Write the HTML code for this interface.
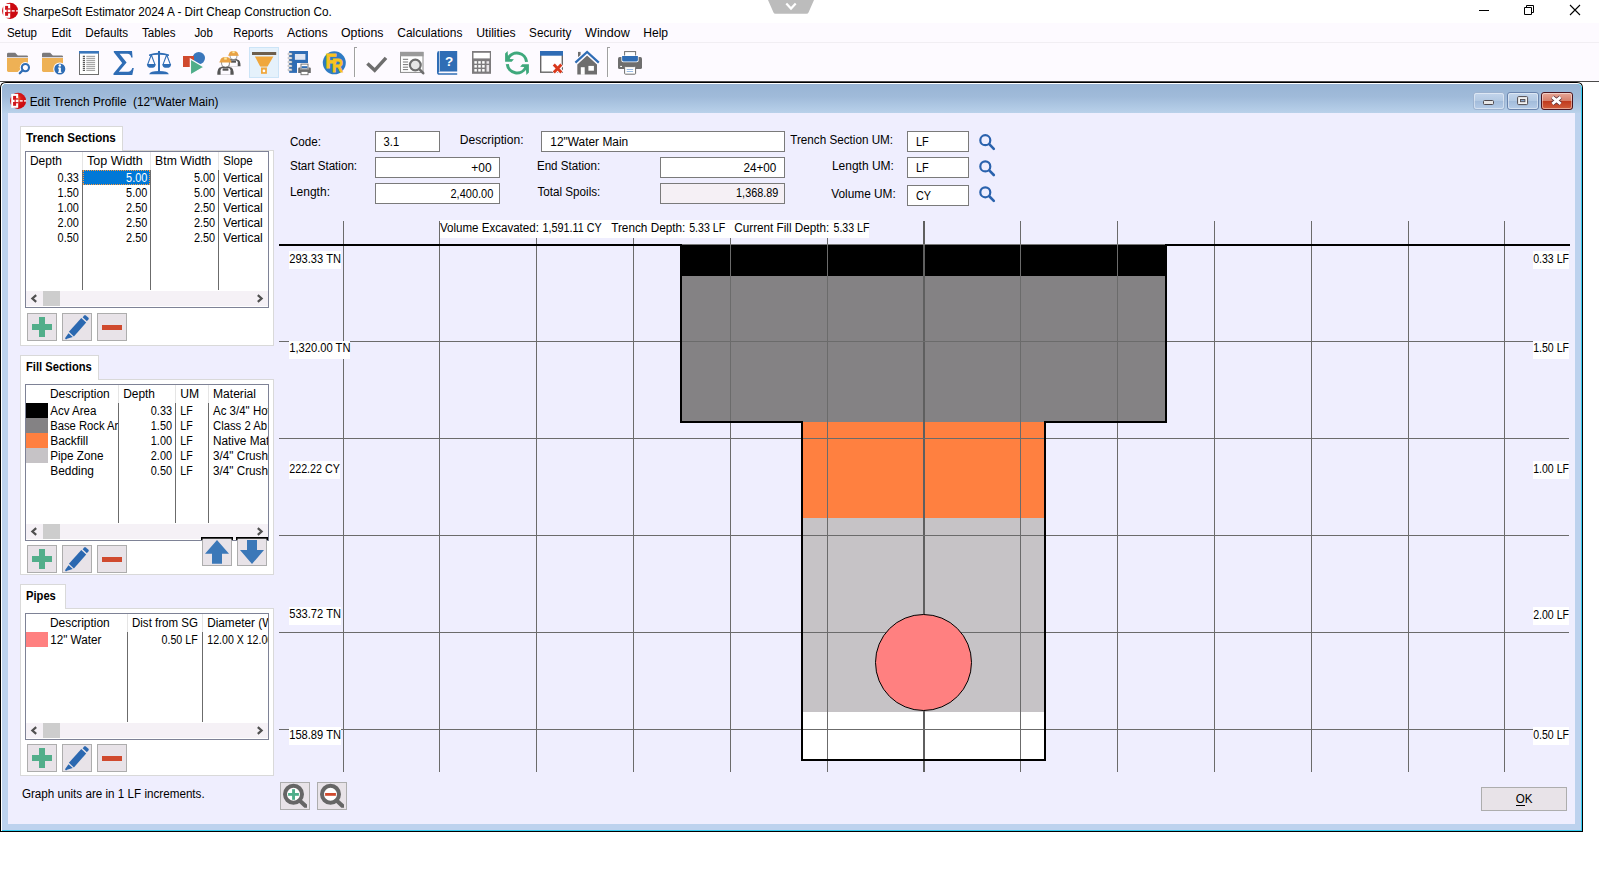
<!DOCTYPE html>
<html lang="en"><head><meta charset="utf-8"><title>SharpeSoft Estimator 2024 A - Dirt Cheap Construction Co.</title>
<style>
html,body{margin:0;padding:0;background:#fff;overflow:hidden}
svg#app{display:block;width:1599px;height:871px;font-family:"Liberation Sans",sans-serif;font-size:12px;fill:#000}
svg#app rect,svg#app path{shape-rendering:auto}
</style></head><body>
<svg id="app" width="1599" height="871" viewBox="0 0 1599 871">
<defs><radialGradient id="ig" cx="0.48" cy="0.36" r="0.5"><stop offset="0" stop-color="#f06a28"/><stop offset="0.45" stop-color="#d81a18"/><stop offset="1" stop-color="#cc0a10"/></radialGradient></defs>
<rect x="0" y="0" width="1599" height="871" fill="#fff" />
<rect x="0" y="23" width="1599" height="58" fill="#fdfaff" />
<rect x="0" y="42" width="1599" height="1" fill="#f1eef3" />
<path d="M768 0H814L808.5 12.5Q808 13.8 806.5 13.8H775.5Q774 13.8 773.5 12.5Z" fill="#bcbcbc"/>
<path d="M786.3 3.6L791 8.6L795.7 3.6" fill="none" stroke="#fff" stroke-width="2.2"/>
<rect x="1479" y="10" width="10" height="1" fill="#000" />
<path d="M1524.5 7.5h7v7h-7zM1526.5 7.5v-2h7v7h-2" fill="none" stroke="#000" stroke-width="1"/>
<path d="M1570 5L1580 15M1580 5L1570 15" fill="none" stroke="#000" stroke-width="1.1"/>
<g transform="translate(10.1 10.9)">
<circle r="8.05" fill="#cc0a10"/>
<rect x="-6.9" y="-7" width="7" height="13.9" fill="#fff"/>
<rect x="-5" y="-5" width="3" height="3.6" fill="#d0141a"/><rect x="-5" y="-2.6" width="5.1" height="1.3" fill="#d0141a"/>
<rect x="-5" y="1.2" width="3" height="3.7" fill="#d0141a"/><rect x="-5" y="1.2" width="5.1" height="1.2" fill="#d0141a"/>
<rect x="-3.6" y="-1.3" width="1.4" height="2.5" fill="#d0141a" opacity="0.8"/>
<rect x="-2.1" y="-0.7" width="2.4" height="1.4" fill="#fff"/><rect x="1.6" y="-0.7" width="3" height="1.4" fill="#fff"/><rect x="6" y="-0.7" width="2.2" height="1.4" fill="#fff"/>
</g>
<text x="23.0" y="15.8" textLength="308.8" lengthAdjust="spacingAndGlyphs" >SharpeSoft Estimator 2024 A - Dirt Cheap Construction Co.</text>
<text x="6.9" y="36.8" textLength="30.1" lengthAdjust="spacingAndGlyphs" >Setup</text>
<text x="51.5" y="36.8" textLength="19.6" lengthAdjust="spacingAndGlyphs" >Edit</text>
<text x="85.3" y="36.8" textLength="42.8" lengthAdjust="spacingAndGlyphs" >Defaults</text>
<text x="142.0" y="36.8" textLength="33.5" lengthAdjust="spacingAndGlyphs" >Tables</text>
<text x="194.4" y="36.8" textLength="18.5" lengthAdjust="spacingAndGlyphs" >Job</text>
<text x="233.3" y="36.8" textLength="39.9" lengthAdjust="spacingAndGlyphs" >Reports</text>
<text x="287.0" y="36.8" textLength="40.6" lengthAdjust="spacingAndGlyphs" >Actions</text>
<text x="341.0" y="36.8" textLength="42.5" lengthAdjust="spacingAndGlyphs" >Options</text>
<text x="397.3" y="36.8" textLength="65.1" lengthAdjust="spacingAndGlyphs" >Calculations</text>
<text x="476.2" y="36.8" textLength="39.4" lengthAdjust="spacingAndGlyphs" >Utilities</text>
<text x="529.1" y="36.8" textLength="42.2" lengthAdjust="spacingAndGlyphs" >Security</text>
<text x="585.1" y="36.8" textLength="44.6" lengthAdjust="spacingAndGlyphs" >Window</text>
<text x="643.2" y="36.8" textLength="24.9" lengthAdjust="spacingAndGlyphs" >Help</text>
<rect x="0" y="81" width="1599" height="1" fill="#4a4a4a" />
<g transform="translate(7 51)">
<path d="M0 3.2Q0 1.8 1.4 1.8H8.2L10.8 4.4H19.8Q21 4.4 21 5.6V6.3H0Z" fill="#7b797b"/>
<path d="M0 7H21V19.6Q21 21 19.6 21H1.4Q0 21 0 19.6Z" fill="#eeb155"/>
<circle cx="18.4" cy="16.6" r="5.6" fill="#fdfaff"/><path d="M16.2 18.8L11 24" stroke="#fdfaff" stroke-width="4.6"/>
<circle cx="18.4" cy="16.6" r="3.6" fill="#fdfaff" stroke="#2f6db5" stroke-width="2.1"/><path d="M15.7 19.3L12.8 22.2" stroke="#2f6db5" stroke-width="2.3" stroke-linecap="round"/>
</g>
<g transform="translate(42 51)">
<path d="M0 3.2Q0 1.8 1.4 1.8H8.2L10.8 4.4H19.8Q21 4.4 21 5.6V6.3H0Z" fill="#7b797b"/>
<path d="M0 7H21V19.6Q21 21 19.6 21H1.4Q0 21 0 19.6Z" fill="#eeb155"/>
<circle cx="17.8" cy="18" r="6.6" fill="#fdfaff"/><circle cx="17.8" cy="18" r="5.5" fill="#2f6db5"/>
<rect x="16.7" y="16.6" width="2.2" height="5" fill="#fff"/><rect x="16" y="16.6" width="2" height="1" fill="#fff"/><rect x="16" y="20.8" width="3.6" height="1" fill="#fff"/><circle cx="17.8" cy="14.6" r="1.25" fill="#fff"/>
</g>
<g transform="translate(77 51)">
<rect x="2.5" y="0.5" width="19" height="23" fill="#fff" stroke="#6e6e6e"/>
<rect x="2" y="0" width="20" height="2.6" fill="#3a77bb"/>
<rect x="5.8" y="4.8" width="2.2" height="1" fill="#333"/><rect x="9.3" y="4.85" width="8.8" height="0.9" fill="#8a8a8a"/>
<rect x="5.8" y="6.8" width="2.2" height="1" fill="#333"/><rect x="9.3" y="6.85" width="8.8" height="0.9" fill="#8a8a8a"/>
<rect x="5.8" y="8.8" width="2.2" height="1" fill="#333"/><rect x="9.3" y="8.85" width="8.8" height="0.9" fill="#8a8a8a"/>
<rect x="5.8" y="10.8" width="2.2" height="1" fill="#333"/><rect x="9.3" y="10.85" width="8.8" height="0.9" fill="#8a8a8a"/>
<rect x="5.8" y="12.8" width="2.2" height="1" fill="#333"/><rect x="9.3" y="12.85" width="8.8" height="0.9" fill="#8a8a8a"/>
<rect x="5.8" y="14.8" width="2.2" height="1" fill="#333"/><rect x="9.3" y="14.85" width="8.8" height="0.9" fill="#8a8a8a"/>
<rect x="5.8" y="16.8" width="2.2" height="1" fill="#333"/><rect x="9.3" y="16.85" width="8.8" height="0.9" fill="#8a8a8a"/>
<rect x="5.8" y="18.8" width="2.2" height="1" fill="#333"/><rect x="9.3" y="18.85" width="8.8" height="0.9" fill="#8a8a8a"/>
</g>
<g transform="translate(112 51)">
<path d="M1.8 0H20L20.6 6.4H19.2Q18.6 2.8 15.5 2.8H7.6L14.6 11.6L6.8 20.8H16Q19 20.8 20.3 17H21.8L20.3 24H1.5V22.6L10.2 12L1.8 1.3Z" fill="#2f6db5"/>
</g>
<g transform="translate(147 51)">
<rect x="11" y="0" width="2" height="21" fill="#2f6db5"/><path d="M2 3.6Q7 1.8 11 1.8H13Q17 1.8 22 3.6V5Q17 3.8 13 3.8H11Q7 3.8 2 5Z" fill="#2f6db5"/>
<path d="M2.2 23.2Q3 20 12 20Q21 20 21.8 23.2Z" fill="#2f6db5"/>
<path d="M4.3 3.8L0.6999999999999997 13.4M4.3 3.8L7.9 13.4" stroke="#2f6db5" stroke-width="1.1" fill="none"/>
<path d="M-0.10000000000000053 12.9H8.7Q8.7 16.8 4.3 16.8Q-0.10000000000000053 16.8 -0.10000000000000053 12.9Z" fill="#2f6db5"/>
<path d="M19.7 3.8L16.099999999999998 13.4M19.7 3.8L23.3 13.4" stroke="#2f6db5" stroke-width="1.1" fill="none"/>
<path d="M15.299999999999999 12.9H24.1Q24.1 16.8 19.7 16.8Q15.299999999999999 16.8 15.299999999999999 12.9Z" fill="#2f6db5"/>
</g>
<g transform="translate(182 51)">
<circle cx="16.8" cy="7.1" r="6.2" fill="#3a77bb"/><rect x="1" y="5" width="11" height="11" fill="#d04a2e"/>
<path d="M8.4 8L22 16L8.4 24Z" fill="#4fae8a" stroke="#fdfaff" stroke-width="1.3"/>
</g>
<g transform="translate(217 51)">
<g transform="translate(9.2 0) scale(0.86)">
<path d="M0.3 17.6Q0.3 10.6 3.6 10.2L5.2 9.4H11.8L13.4 10.2Q16.7 10.6 16.7 17.6Z" fill="#555"/>
<path d="M3.6 17.6V13.2Q3.6 11.4 5.4 11H11.6Q13.4 11.4 13.4 13.2V17.6Z" fill="#fdfaff"/>
<rect x="5.6" y="11.2" width="5.8" height="2.4" fill="#555"/>
<path d="M4.6 4.4H12.4V7Q12.4 10 8.5 10Q4.6 10 4.6 7Z" fill="#fff" stroke="#666" stroke-width="0.7"/>
<path d="M3 5Q3 0 8.5 0Q14 0 14 5Z" fill="#e8a245"/><rect x="2.4" y="4.2" width="12.2" height="1.3" rx="0.6" fill="#e8a245"/><rect x="7.2" y="0.3" width="2.6" height="2.2" fill="#fbe9a0"/>
</g>
<g transform="translate(0 6.1) scale(1.0)">
<path d="M0.3 17.6Q0.3 10.6 3.6 10.2L5.2 9.4H11.8L13.4 10.2Q16.7 10.6 16.7 17.6Z" fill="#555"/>
<path d="M3.6 17.6V13.2Q3.6 11.4 5.4 11H11.6Q13.4 11.4 13.4 13.2V17.6Z" fill="#fdfaff"/>
<rect x="5.6" y="11.2" width="5.8" height="2.4" fill="#555"/>
<path d="M4.6 4.4H12.4V7Q12.4 10 8.5 10Q4.6 10 4.6 7Z" fill="#fff" stroke="#666" stroke-width="0.7"/>
<path d="M3 5Q3 0 8.5 0Q14 0 14 5Z" fill="#e8a245"/><rect x="2.4" y="4.2" width="12.2" height="1.3" rx="0.6" fill="#e8a245"/><rect x="7.2" y="0.3" width="2.6" height="2.2" fill="#fbe9a0"/>
</g>
</g>
<rect x="249.5" y="47.5" width="29" height="30" fill="#e5f1fb" stroke="#cce4f7" />
<g transform="translate(252 51)">
<rect x="0" y="1" width="24.2" height="3" fill="#6d5f4d"/>
<path d="M2.9 5.4H21.4L15.6 15.6H8.2Z" fill="#f0a73c"/><rect x="9" y="15.6" width="5.9" height="1.3" fill="#f0a73c" opacity="0.55"/><rect x="9" y="16.9" width="5.9" height="5.9" fill="#f0a73c"/><circle cx="11.95" cy="19.9" r="1.35" fill="#fff"/>
</g>
<g transform="translate(287 51)">
<rect x="2.2" y="0" width="18.8" height="21.9" fill="#2f6db5"/>
<rect x="1.2" y="2" width="3.8" height="2" rx="0.5" fill="#fff" stroke="#8a8a8a" stroke-width="0.6"/>
<rect x="1.2" y="6" width="3.8" height="2" rx="0.5" fill="#fff" stroke="#8a8a8a" stroke-width="0.6"/>
<rect x="1.2" y="10" width="3.8" height="2" rx="0.5" fill="#fff" stroke="#8a8a8a" stroke-width="0.6"/>
<rect x="1.2" y="13.9" width="3.8" height="2" rx="0.5" fill="#fff" stroke="#8a8a8a" stroke-width="0.6"/>
<rect x="1.2" y="17.8" width="3.8" height="2" rx="0.5" fill="#fff" stroke="#8a8a8a" stroke-width="0.6"/>
<rect x="7.9" y="3" width="10.5" height="5.8" fill="#dfe6f3"/>
<rect x="10" y="12" width="15" height="13" fill="#fdfaff"/>
<rect x="14" y="13.1" width="7" height="5" fill="#fff" stroke="#6d6d6d" stroke-width="0.9"/>
<rect x="14.6" y="15.2" width="5.8" height="2" fill="#2f6db5"/>
<path d="M11.2 17.4Q11.2 16.4 12.2 16.4H13.4V18.4H21.6V16.4H22.8Q23.8 16.4 23.8 17.4V21.9H11.2Z" fill="#6d6d6d"/>
<rect x="14" y="20.4" width="7" height="3.3" fill="#fff" stroke="#6d6d6d" stroke-width="0.9"/>
</g>
<g transform="translate(322 51)">
<circle cx="12.3" cy="11.8" r="11.5" fill="#2e7bc4"/>
<text transform="translate(3.4 16.6) scale(0.9 1)" font-size="20" font-weight="bold" fill="#f9c31f" stroke="#f9c31f" stroke-width="0.9">F</text>
<text transform="translate(10 21) scale(0.8 1)" font-size="19" font-weight="bold" fill="#f9c31f" stroke="#f9c31f" stroke-width="0.9">R</text>
</g>
<rect x="354" y="47" width="1" height="30" fill="#a0a0a0" />
<rect x="355" y="47" width="2" height="1" fill="#a0a0a0" />
<rect x="355" y="48" width="1" height="29" fill="#fff" />
<rect x="607" y="47" width="1" height="30" fill="#a0a0a0" />
<rect x="608" y="47" width="2" height="1" fill="#a0a0a0" />
<rect x="608" y="48" width="1" height="29" fill="#fff" />
<g transform="translate(365 51)">
<path d="M2.4 12.4L9.7 19.3L21 6.8" fill="none" stroke="#6e6e6e" stroke-width="3.5"/>
</g>
<g transform="translate(400 51)">
<rect x="0.5" y="1.4" width="22.5" height="20" fill="#fff" stroke="#8a8a8a"/><rect x="0" y="0.9" width="23.5" height="4.4" fill="#9a9a9a"/>
<rect x="2.9" y="7.800000000000001" width="5.2" height="1" fill="#777"/>
<rect x="2.9" y="10.5" width="5.2" height="1" fill="#777"/>
<rect x="2.9" y="13.1" width="5.2" height="1" fill="#777"/>
<rect x="2.9" y="15.7" width="5.2" height="1" fill="#777"/>
<rect x="2.9" y="18.1" width="5.2" height="1" fill="#777"/>
<circle cx="15.3" cy="14" r="6.6" fill="#fff"/><circle cx="15.3" cy="14" r="5.4" fill="#e6e6e6" stroke="#6e6e6e" stroke-width="2.2"/><path d="M19.6 18.4L23.2 22.2" stroke="#6e6e6e" stroke-width="2.6" stroke-linecap="round"/>
</g>
<g transform="translate(435 51)">
<path d="M2 2.4Q2 0 4.2 0H22.2V20.4H5Q3.6 20.4 3.6 21.4Q3.6 22.3 5 22.3H22.2V23.8H4.4Q2 23.8 2 21.2Z" fill="#2f6db5"/>
<rect x="4.2" y="0" width="0.6" height="20.6" fill="#fff"/>
<text x="14" y="14.6" text-anchor="middle" font-size="13.5" font-weight="bold" fill="#fff">?</text>
</g>
<g transform="translate(470 51)">
<rect x="2" y="0" width="19" height="22.8" fill="#7d7b7d"/><rect x="3.5" y="1.8" width="16.3" height="5.6" fill="#fff"/>
<rect x="4.35" y="10.15" width="2.5" height="2.5" fill="#fff"/>
<rect x="4.35" y="14.05" width="2.5" height="2.5" fill="#fff"/>
<rect x="4.35" y="18.05" width="2.5" height="2.5" fill="#fff"/>
<rect x="8.25" y="10.15" width="2.5" height="2.5" fill="#fff"/>
<rect x="8.25" y="14.05" width="2.5" height="2.5" fill="#fff"/>
<rect x="8.25" y="18.05" width="2.5" height="2.5" fill="#fff"/>
<rect x="12.15" y="10.15" width="2.5" height="2.5" fill="#fff"/>
<rect x="12.15" y="14.05" width="2.5" height="2.5" fill="#fff"/>
<rect x="12.15" y="18.05" width="2.5" height="2.5" fill="#fff"/>
<rect x="16.5" y="10.2" width="2.6" height="2.5" fill="#e8e4e8"/><rect x="16.5" y="14" width="2.6" height="6.6" fill="#e8e4e8"/>
</g>
<g transform="translate(505 51)">
<path d="M21.6 10.8A9.75 9.75 0 0 0 3.2 7.4" fill="none" stroke="#3fa87c" stroke-width="3.1"/>
<path d="M2.3 13.2A9.75 9.75 0 0 0 20.7 16.6" fill="none" stroke="#3fa87c" stroke-width="3.1"/>
<path d="M0.1 10.8V2.4L2.6 0.1L3 5L5 7.9L8.9 8.3L6.7 10.8Z" fill="#3fa87c"/><path d="M23.9 13.2V21.6L21.4 23.9L21 19L19 16.1L15.1 15.7L17.3 13.2Z" fill="#3fa87c"/>
</g>
<g transform="translate(540 51)">
<rect x="0.7" y="0.7" width="21.6" height="20.5" fill="#fff" stroke="#666" stroke-width="1.4"/>
<rect x="0" y="0" width="23" height="4.7" fill="#2f6db5"/>
<path d="M13.4 13.2L21.8 21.8M21.8 13.2L13.4 21.8" stroke="#fdfaff" stroke-width="5.2"/><path d="M13.8 13.6L21.4 21.4M21.4 13.6L13.8 21.4" stroke="#d9391c" stroke-width="2.9"/>
</g>
<g transform="translate(575 51)">
<rect x="3" y="0.9" width="2.6" height="5" fill="#6e6e6e"/>
<path d="M12.1 4.4L22 13.6V23.6H2.3V13.6Z" fill="#6e6e6e"/>
<path d="M0.4 11.6L12.1 0.9L23.8 11.6" fill="none" stroke="#fdfaff" stroke-width="4.4"/><path d="M0.4 11.6L12.1 0.9L23.8 11.6" fill="none" stroke="#2f6db5" stroke-width="2.2"/>
<rect x="5.8" y="16.2" width="3.9" height="7.6" fill="#fff"/><rect x="13.4" y="14.9" width="5.5" height="4.8" fill="#fff"/>
</g>
<g transform="translate(618 51)">
<rect x="0" y="6.1" width="24" height="12" rx="1.6" fill="#6e6e6e"/>
<rect x="6.6" y="0.6" width="11" height="6" fill="#fff" stroke="#6e6e6e" stroke-width="1"/>
<path d="M3.4 4.6H20.6V9.4Q20.6 11.2 18.8 11.2H5.2Q3.4 11.2 3.4 9.4Z" fill="#fff"/><path d="M4.1 5.1H19.9V9.1Q19.9 10.5 18.5 10.5H5.5Q4.1 10.5 4.1 9.1Z" fill="#2f6db5"/>
<rect x="6.6" y="15.6" width="11" height="7.6" rx="0.8" fill="#fff" stroke="#6e6e6e" stroke-width="1"/>
<rect x="8.7" y="18" width="6.4" height="0.9" fill="#8fb4e3"/><rect x="8.7" y="20" width="6.4" height="0.9" fill="#8fb4e3"/><rect x="2.2" y="14.9" width="1.8" height="1.1" fill="#fff"/>
</g>
<defs><linearGradient id="tg" gradientUnits="userSpaceOnUse" x1="0" y1="84" x2="0" y2="113"><stop offset="0" stop-color="#98b4d4"/><stop offset="0.45" stop-color="#a0bbda"/><stop offset="1" stop-color="#b9d1ea"/></linearGradient>
<linearGradient id="bg1" x1="0" y1="0" x2="0" y2="1"><stop offset="0" stop-color="#c4d6ec"/><stop offset="0.48" stop-color="#b3c9e3"/><stop offset="0.52" stop-color="#a3bcdb"/><stop offset="1" stop-color="#b7cde8"/></linearGradient>
<linearGradient id="bg2" x1="0" y1="0" x2="0" y2="1"><stop offset="0" stop-color="#e9a99a"/><stop offset="0.48" stop-color="#d6806c"/><stop offset="0.52" stop-color="#c03a1e"/><stop offset="1" stop-color="#d2603e"/></linearGradient></defs>
<path d="M0 832V88Q0 82 6 82H1577Q1583 82 1583 88V832Z" fill="#000"/>
<path d="M1 831V88Q1 83 6 83H1577Q1582 83 1582 88V831Z" fill="#fff"/>
<path d="M2 831V88.5Q2 84 6.5 84H1577Q1582 84 1582 88.5V831Z" fill="#35cdf2"/>
<path d="M2 830V88.5Q2 84 6.5 84H1576.5Q1581 84 1581 88.5V830Z" fill="url(#tg)"/>
<rect x="2" y="113" width="1579" height="717" fill="#bdd2ee" />
<rect x="8" y="113" width="1567" height="711" fill="#efeefe" />
<g transform="translate(18.1 100.9)">
<circle r="8.05" fill="url(#ig)"/>
<rect x="-6.9" y="-7" width="7" height="13.9" fill="#fff"/>
<rect x="-5" y="-5" width="3" height="3.6" fill="#d0141a"/><rect x="-5" y="-2.6" width="5.1" height="1.3" fill="#d0141a"/>
<rect x="-5" y="1.2" width="3" height="3.7" fill="#d0141a"/><rect x="-5" y="1.2" width="5.1" height="1.2" fill="#d0141a"/>
<rect x="-3.6" y="-1.3" width="1.4" height="2.5" fill="#d0141a" opacity="0.8"/>
<rect x="-2.1" y="-0.7" width="2.4" height="1.4" fill="#fff"/><rect x="1.6" y="-0.7" width="3" height="1.4" fill="#fff"/><rect x="6" y="-0.7" width="2.2" height="1.4" fill="#fff"/>
</g>
<text x="29.7" y="105.8" textLength="188.8" lengthAdjust="spacingAndGlyphs" xml:space="preserve">Edit Trench Profile  (12"Water Main)</text>
<rect x="1473.5" y="92.5" width="31" height="17" rx="2.5" fill="url(#bg1)" stroke="#9db3d0"/>
<rect x="1474.5" y="93.5" width="29" height="15" rx="1.8" fill="none" stroke="#fff" opacity="0.45"/>
<rect x="1507.5" y="92.5" width="31" height="17" rx="2.5" fill="url(#bg1)" stroke="#6a84ad"/>
<rect x="1508.5" y="93.5" width="29" height="15" rx="1.8" fill="none" stroke="#fff" opacity="0.45"/>
<rect x="1541.5" y="92.5" width="31" height="17" rx="2.5" fill="url(#bg2)" stroke="#4a1520"/>
<rect x="1542.5" y="93.5" width="29" height="15" rx="1.8" fill="none" stroke="#fff" opacity="0.45"/>
<rect x="1483.5" y="100.5" width="10" height="4" rx="1" fill="#e6e6e6" stroke="#4f4a50" stroke-width="1"/>
<rect x="1517.6" y="96.6" width="10" height="8" rx="1" fill="#f2f2f2" stroke="#4f4a50" stroke-width="1"/><rect x="1520.5" y="99.5" width="4.4" height="2.2" fill="#8aa6cc" stroke="#4f4a50" stroke-width="0.9"/>
<path d="M1552.4 97.1L1560.6 103.8M1560.6 97.1L1552.4 103.8" stroke="#5a3038" stroke-width="4.4"/><path d="M1552.4 97.1L1560.6 103.8M1560.6 97.1L1552.4 103.8" stroke="#fff" stroke-width="2.8"/>
<rect x="20.5" y="150.5" width="253" height="195" fill="#fff" stroke="#d9d9d9" />
<rect x="20.5" y="126.5" width="102" height="24" fill="#fff" stroke="#d9d9d9" />
<rect x="21" y="150" width="101" height="1" fill="#fff" />
<text x="26.0" y="142" font-weight="bold" textLength="89.8" lengthAdjust="spacingAndGlyphs" >Trench Sections</text>
<rect x="25.5" y="151.5" width="243" height="156" fill="#fff" stroke="#7e8296" />
<rect x="82" y="152" width="1" height="18" fill="#e5e5e5" />
<rect x="82" y="170" width="1" height="120" fill="#6b6b6b" />
<rect x="150" y="152" width="1" height="18" fill="#e5e5e5" />
<rect x="150" y="170" width="1" height="120" fill="#6b6b6b" />
<rect x="218" y="152" width="1" height="18" fill="#e5e5e5" />
<rect x="218" y="170" width="1" height="120" fill="#6b6b6b" />
<rect x="26" y="291" width="242" height="15" fill="#f5f1f6" />
<rect x="43" y="291" width="17" height="15" fill="#cdcdcd" />
<path d="M36.2 295.2L32.4 298.5L36.2 301.8" fill="none" stroke="#505050" stroke-width="2.2"/>
<path d="M257.8 295.2L261.6 298.5L257.8 301.8" fill="none" stroke="#505050" stroke-width="2.2"/>
<svg x="26" y="152" width="242" height="139" overflow="hidden"><g transform="translate(-26 -152)">
<text x="29.9" y="164.8" textLength="32.0" lengthAdjust="spacingAndGlyphs" >Depth</text>
<text x="87.1" y="164.8" textLength="55.7" lengthAdjust="spacingAndGlyphs" >Top Width</text>
<text x="155.1" y="164.8" textLength="56.3" lengthAdjust="spacingAndGlyphs" >Btm Width</text>
<text x="223.3" y="164.8" textLength="29.4" lengthAdjust="spacingAndGlyphs" >Slope</text>
<rect x="83" y="170" width="67" height="15" fill="#0078d7" />
<path d="M83 170.5H150M83 184.5H150M83.5 171V184M149.5 171V184" fill="none" stroke="#ff9a3c" stroke-dasharray="1 1" shape-rendering="crispEdges"/>
<text x="78.8" y="181.5" text-anchor="end" textLength="21.2" lengthAdjust="spacingAndGlyphs" >0.33</text>
<text x="147.3" y="181.5" text-anchor="end" fill="#fff" textLength="21.2" lengthAdjust="spacingAndGlyphs" >5.00</text>
<text x="215.1" y="181.5" text-anchor="end" textLength="21.2" lengthAdjust="spacingAndGlyphs" >5.00</text>
<text x="223.3" y="181.5" textLength="39.5" lengthAdjust="spacingAndGlyphs" >Vertical</text>
<text x="78.8" y="196.5" text-anchor="end" textLength="21.2" lengthAdjust="spacingAndGlyphs" >1.50</text>
<text x="147.3" y="196.5" text-anchor="end" textLength="21.2" lengthAdjust="spacingAndGlyphs" >5.00</text>
<text x="215.1" y="196.5" text-anchor="end" textLength="21.2" lengthAdjust="spacingAndGlyphs" >5.00</text>
<text x="223.3" y="196.5" textLength="39.5" lengthAdjust="spacingAndGlyphs" >Vertical</text>
<text x="78.8" y="211.5" text-anchor="end" textLength="21.2" lengthAdjust="spacingAndGlyphs" >1.00</text>
<text x="147.3" y="211.5" text-anchor="end" textLength="21.2" lengthAdjust="spacingAndGlyphs" >2.50</text>
<text x="215.1" y="211.5" text-anchor="end" textLength="21.2" lengthAdjust="spacingAndGlyphs" >2.50</text>
<text x="223.3" y="211.5" textLength="39.5" lengthAdjust="spacingAndGlyphs" >Vertical</text>
<text x="78.8" y="226.5" text-anchor="end" textLength="21.2" lengthAdjust="spacingAndGlyphs" >2.00</text>
<text x="147.3" y="226.5" text-anchor="end" textLength="21.2" lengthAdjust="spacingAndGlyphs" >2.50</text>
<text x="215.1" y="226.5" text-anchor="end" textLength="21.2" lengthAdjust="spacingAndGlyphs" >2.50</text>
<text x="223.3" y="226.5" textLength="39.5" lengthAdjust="spacingAndGlyphs" >Vertical</text>
<text x="78.8" y="241.5" text-anchor="end" textLength="21.2" lengthAdjust="spacingAndGlyphs" >0.50</text>
<text x="147.3" y="241.5" text-anchor="end" textLength="21.2" lengthAdjust="spacingAndGlyphs" >2.50</text>
<text x="215.1" y="241.5" text-anchor="end" textLength="21.2" lengthAdjust="spacingAndGlyphs" >2.50</text>
<text x="223.3" y="241.5" textLength="39.5" lengthAdjust="spacingAndGlyphs" >Vertical</text>
</g></svg>
<rect x="27.5" y="313.5" width="29" height="27" fill="#e8e3e8" stroke="#adadad" />
<rect x="32" y="324" width="20" height="6" fill="#52ae8a" />
<rect x="39" y="317" width="6" height="20" fill="#52ae8a" />
<rect x="62.5" y="313.5" width="29" height="27" fill="#e8e3e8" stroke="#adadad" />
<g transform="translate(62 313)"><path d="M6.9 18.8L19.3 5L24.2 9.5L11.9 23.4Z" fill="#2b68b0"/><path d="M20.6 4.3L22.3 2.4Q23 1.8 23.8 2.4L26.5 4.8Q27.1 5.5 26.5 6.3L24.9 8.2Z" fill="#2b68b0"/><path d="M6.5 20.2L10.8 24.1L5 25.8Q4.6 26.6 3.6 26.2Q2.8 25.5 3.3 24.8Z" fill="#2b68b0"/></g>
<rect x="97.5" y="313.5" width="29" height="27" fill="#e8e3e8" stroke="#adadad" />
<rect x="102" y="325" width="20" height="5" fill="#d04a2e" />
<rect x="20.5" y="379.5" width="253" height="195" fill="#fff" stroke="#d9d9d9" />
<rect x="20.5" y="355.5" width="78" height="24" fill="#fff" stroke="#d9d9d9" />
<rect x="21" y="379" width="77" height="1" fill="#fff" />
<text x="26.0" y="371" font-weight="bold" textLength="65.8" lengthAdjust="spacingAndGlyphs" >Fill Sections</text>
<rect x="25.5" y="384.5" width="243" height="156" fill="#fff" stroke="#7e8296" />
<rect x="118" y="385" width="1" height="18" fill="#e5e5e5" />
<rect x="118" y="403" width="1" height="120" fill="#6b6b6b" />
<rect x="175" y="385" width="1" height="18" fill="#e5e5e5" />
<rect x="175" y="403" width="1" height="120" fill="#6b6b6b" />
<rect x="208" y="385" width="1" height="18" fill="#e5e5e5" />
<rect x="208" y="403" width="1" height="120" fill="#6b6b6b" />
<rect x="26" y="524" width="242" height="15" fill="#f5f1f6" />
<rect x="43" y="524" width="17" height="15" fill="#cdcdcd" />
<path d="M36.2 528.2L32.4 531.5L36.2 534.8" fill="none" stroke="#505050" stroke-width="2.2"/>
<path d="M257.8 528.2L261.6 531.5L257.8 534.8" fill="none" stroke="#505050" stroke-width="2.2"/>
<svg x="26" y="385" width="242" height="139" overflow="hidden"><g transform="translate(-26 -385)">
<text x="49.9" y="397.8" textLength="59.9" lengthAdjust="spacingAndGlyphs" >Description</text>
<text x="123.2" y="397.8" textLength="31.8" lengthAdjust="spacingAndGlyphs" >Depth</text>
<text x="180.2" y="397.8" textLength="18.9" lengthAdjust="spacingAndGlyphs" >UM</text>
<text x="213.0" y="397.8" textLength="43.0" lengthAdjust="spacingAndGlyphs" >Material</text>
<rect x="26" y="403" width="22" height="15" fill="#000" />
<svg x="48" y="403" width="70" height="15" overflow="hidden"><g transform="translate(-48 -403)">
<text x="50.2" y="414.7" textLength="46.3" lengthAdjust="spacingAndGlyphs" >Acv Area</text>
</g></svg>
<text x="172.0" y="414.7" text-anchor="end" textLength="21.2" lengthAdjust="spacingAndGlyphs" >0.33</text>
<text x="180.2" y="414.7" textLength="12.5" lengthAdjust="spacingAndGlyphs" >LF</text>
<text x="213.0" y="414.7" textLength="78.9" lengthAdjust="spacingAndGlyphs" >Ac 3/4" Hot Mix</text>
<rect x="26" y="418" width="22" height="15" fill="#848284" />
<svg x="48" y="418" width="70" height="15" overflow="hidden"><g transform="translate(-48 -418)">
<text x="50.2" y="429.7" textLength="80.7" lengthAdjust="spacingAndGlyphs" >Base Rock Area</text>
</g></svg>
<text x="172.0" y="429.7" text-anchor="end" textLength="21.2" lengthAdjust="spacingAndGlyphs" >1.50</text>
<text x="180.2" y="429.7" textLength="12.5" lengthAdjust="spacingAndGlyphs" >LF</text>
<text x="213.0" y="429.7" textLength="54.0" lengthAdjust="spacingAndGlyphs" >Class 2 Ab</text>
<rect x="26" y="433" width="22" height="15" fill="#ff8040" />
<svg x="48" y="433" width="70" height="15" overflow="hidden"><g transform="translate(-48 -433)">
<text x="50.2" y="444.7" textLength="38.0" lengthAdjust="spacingAndGlyphs" >Backfill</text>
</g></svg>
<text x="172.0" y="444.7" text-anchor="end" textLength="21.2" lengthAdjust="spacingAndGlyphs" >1.00</text>
<text x="180.2" y="444.7" textLength="12.5" lengthAdjust="spacingAndGlyphs" >LF</text>
<text x="213.0" y="444.7" textLength="78.6" lengthAdjust="spacingAndGlyphs" >Native Material</text>
<rect x="26" y="448" width="22" height="15" fill="#c6c3c6" />
<svg x="48" y="448" width="70" height="15" overflow="hidden"><g transform="translate(-48 -448)">
<text x="50.2" y="459.7" textLength="53.3" lengthAdjust="spacingAndGlyphs" >Pipe Zone</text>
</g></svg>
<text x="172.0" y="459.7" text-anchor="end" textLength="21.2" lengthAdjust="spacingAndGlyphs" >2.00</text>
<text x="180.2" y="459.7" textLength="12.5" lengthAdjust="spacingAndGlyphs" >LF</text>
<text x="213.0" y="459.7" textLength="97.9" lengthAdjust="spacingAndGlyphs" >3/4" Crushed Rock</text>
<svg x="48" y="463" width="70" height="15" overflow="hidden"><g transform="translate(-48 -463)">
<text x="50.2" y="474.7" textLength="43.8" lengthAdjust="spacingAndGlyphs" >Bedding</text>
</g></svg>
<text x="172.0" y="474.7" text-anchor="end" textLength="21.2" lengthAdjust="spacingAndGlyphs" >0.50</text>
<text x="180.2" y="474.7" textLength="12.5" lengthAdjust="spacingAndGlyphs" >LF</text>
<text x="213.0" y="474.7" textLength="97.9" lengthAdjust="spacingAndGlyphs" >3/4" Crushed Rock</text>
</g></svg>
<rect x="27.5" y="545.5" width="29" height="27" fill="#e8e3e8" stroke="#adadad" />
<rect x="32" y="556" width="20" height="6" fill="#52ae8a" />
<rect x="39" y="549" width="6" height="20" fill="#52ae8a" />
<rect x="62.5" y="545.5" width="29" height="27" fill="#e8e3e8" stroke="#adadad" />
<g transform="translate(62 545)"><path d="M6.9 18.8L19.3 5L24.2 9.5L11.9 23.4Z" fill="#2b68b0"/><path d="M20.6 4.3L22.3 2.4Q23 1.8 23.8 2.4L26.5 4.8Q27.1 5.5 26.5 6.3L24.9 8.2Z" fill="#2b68b0"/><path d="M6.5 20.2L10.8 24.1L5 25.8Q4.6 26.6 3.6 26.2Q2.8 25.5 3.3 24.8Z" fill="#2b68b0"/></g>
<rect x="97.5" y="545.5" width="29" height="27" fill="#e8e3e8" stroke="#adadad" />
<rect x="102" y="557" width="20" height="5" fill="#d04a2e" />
<rect x="202.5" y="538.5" width="29" height="27" fill="#e8e3e8" stroke="#adadad" />
<rect x="201" y="537" width="32" height="1.6" fill="#000" />
<rect x="201" y="538" width="1.4" height="2" fill="#000" />
<rect x="231.6" y="538" width="1.4" height="2" fill="#000" />
<rect x="237.5" y="538.5" width="29" height="27" fill="#e8e3e8" stroke="#adadad" />
<rect x="236" y="537" width="32" height="1.6" fill="#000" />
<rect x="236" y="538" width="1.4" height="2" fill="#000" />
<rect x="266.6" y="538" width="1.4" height="2" fill="#000" />
<path d="M217 540L229 553.7H222V563.8H212V553.7H205Z" fill="#3b78b8"/>
<path d="M247 540H257V550H264L252 564L240 550H247Z" fill="#3b78b8"/>
<rect x="20.5" y="608.5" width="253" height="167" fill="#fff" stroke="#d9d9d9" />
<rect x="20.5" y="584.5" width="45" height="24" fill="#fff" stroke="#d9d9d9" />
<rect x="21" y="608" width="44" height="1" fill="#fff" />
<text x="26.0" y="600" font-weight="bold" textLength="29.8" lengthAdjust="spacingAndGlyphs" >Pipes</text>
<rect x="25.5" y="613.5" width="243" height="126" fill="#fff" stroke="#7e8296" />
<rect x="127" y="614" width="1" height="18" fill="#e5e5e5" />
<rect x="127" y="632" width="1" height="90" fill="#6b6b6b" />
<rect x="202" y="614" width="1" height="18" fill="#e5e5e5" />
<rect x="202" y="632" width="1" height="90" fill="#6b6b6b" />
<rect x="26" y="723" width="242" height="15" fill="#f5f1f6" />
<rect x="43" y="723" width="17" height="15" fill="#cdcdcd" />
<path d="M36.2 727.2L32.4 730.5L36.2 733.8" fill="none" stroke="#505050" stroke-width="2.2"/>
<path d="M257.8 727.2L261.6 730.5L257.8 733.8" fill="none" stroke="#505050" stroke-width="2.2"/>
<svg x="26" y="614" width="242" height="109" overflow="hidden"><g transform="translate(-26 -614)">
<text x="49.9" y="626.8" textLength="59.9" lengthAdjust="spacingAndGlyphs" >Description</text>
<text x="132.0" y="626.8" textLength="65.9" lengthAdjust="spacingAndGlyphs" >Dist from SG</text>
<text x="207.2" y="626.8" textLength="92.9" lengthAdjust="spacingAndGlyphs" >Diameter (W X H)</text>
<rect x="26" y="632" width="22" height="15" fill="#ff8080" />
<text x="50.2" y="643.7" textLength="51.1" lengthAdjust="spacingAndGlyphs" >12" Water</text>
<text x="197.7" y="643.7" text-anchor="end" textLength="36.2" lengthAdjust="spacingAndGlyphs" >0.50 LF</text>
<text x="207.3" y="643.7" textLength="65.9" lengthAdjust="spacingAndGlyphs" >12.00 X 12.00</text>
</g></svg>
<rect x="27.5" y="744.5" width="29" height="27" fill="#e8e3e8" stroke="#adadad" />
<rect x="32" y="755" width="20" height="6" fill="#52ae8a" />
<rect x="39" y="748" width="6" height="20" fill="#52ae8a" />
<rect x="62.5" y="744.5" width="29" height="27" fill="#e8e3e8" stroke="#adadad" />
<g transform="translate(62 744)"><path d="M6.9 18.8L19.3 5L24.2 9.5L11.9 23.4Z" fill="#2b68b0"/><path d="M20.6 4.3L22.3 2.4Q23 1.8 23.8 2.4L26.5 4.8Q27.1 5.5 26.5 6.3L24.9 8.2Z" fill="#2b68b0"/><path d="M6.5 20.2L10.8 24.1L5 25.8Q4.6 26.6 3.6 26.2Q2.8 25.5 3.3 24.8Z" fill="#2b68b0"/></g>
<rect x="97.5" y="744.5" width="29" height="27" fill="#e8e3e8" stroke="#adadad" />
<rect x="102" y="756" width="20" height="5" fill="#d04a2e" />
<text x="21.9" y="798" textLength="182.8" lengthAdjust="spacingAndGlyphs" >Graph units are in 1 LF increments.</text>
<text x="289.9" y="145.7" textLength="31.1" lengthAdjust="spacingAndGlyphs" >Code:</text>
<rect x="375.5" y="131.5" width="64" height="20" fill="#fff" stroke="#7a7a7a" />
<text x="383.6" y="145.7" textLength="15.5" lengthAdjust="spacingAndGlyphs" >3.1</text>
<text x="459.7" y="144.2" textLength="63.8" lengthAdjust="spacingAndGlyphs" >Description:</text>
<rect x="541.5" y="131.5" width="243" height="20" fill="#fff" stroke="#7a7a7a" />
<text x="550.3" y="145.7" textLength="77.9" lengthAdjust="spacingAndGlyphs" >12"Water Main</text>
<text x="790.2" y="143.8" textLength="102.9" lengthAdjust="spacingAndGlyphs" >Trench Section UM:</text>
<rect x="907.5" y="131.5" width="61" height="20" fill="#fff" stroke="#7a7a7a" />
<text x="916.0" y="146" textLength="12.8" lengthAdjust="spacingAndGlyphs" >LF</text>
<circle cx="985.3000000000001" cy="140.2" r="5" fill="none" stroke="#2a62ad" stroke-width="2.2"/><path d="M989.5 144.39999999999998L993.8000000000001 148.79999999999998" stroke="#2a62ad" stroke-width="2.6" stroke-linecap="round"/>
<text x="289.9" y="169.7" textLength="67.2" lengthAdjust="spacingAndGlyphs" >Start Station:</text>
<rect x="375.5" y="157.5" width="124" height="20" fill="#fff" stroke="#7a7a7a" />
<text x="491.6" y="171.8" text-anchor="end" textLength="20.3" lengthAdjust="spacingAndGlyphs" >+00</text>
<text x="536.9" y="169.7" textLength="63.3" lengthAdjust="spacingAndGlyphs" >End Station:</text>
<rect x="660.5" y="157.5" width="124" height="20" fill="#fff" stroke="#7a7a7a" />
<text x="776.3" y="171.8" text-anchor="end" textLength="32.8" lengthAdjust="spacingAndGlyphs" >24+00</text>
<text x="831.9" y="169.7" textLength="62.0" lengthAdjust="spacingAndGlyphs" >Length UM:</text>
<rect x="907.5" y="157.5" width="61" height="20" fill="#fff" stroke="#7a7a7a" />
<text x="916.0" y="172" textLength="12.8" lengthAdjust="spacingAndGlyphs" >LF</text>
<circle cx="985.3000000000001" cy="166.4" r="5" fill="none" stroke="#2a62ad" stroke-width="2.2"/><path d="M989.5 170.6L993.8000000000001 175.0" stroke="#2a62ad" stroke-width="2.6" stroke-linecap="round"/>
<text x="289.9" y="195.5" textLength="40.1" lengthAdjust="spacingAndGlyphs" >Length:</text>
<rect x="375.5" y="183.5" width="124" height="20" fill="#fff" stroke="#7a7a7a" />
<text x="493.3" y="197.8" text-anchor="end" textLength="42.8" lengthAdjust="spacingAndGlyphs" >2,400.00</text>
<text x="537.5" y="196" textLength="62.8" lengthAdjust="spacingAndGlyphs" >Total Spoils:</text>
<rect x="660.5" y="183.5" width="124" height="20" fill="#f5f0f5" stroke="#7a7a7a" />
<text x="778.3" y="197.3" text-anchor="end" textLength="42.2" lengthAdjust="spacingAndGlyphs" >1,368.89</text>
<text x="831.2" y="197.8" textLength="64.6" lengthAdjust="spacingAndGlyphs" >Volume UM:</text>
<rect x="907.5" y="185.5" width="61" height="20" fill="#fff" stroke="#7a7a7a" />
<text x="916.0" y="199.8" textLength="15.1" lengthAdjust="spacingAndGlyphs" >CY</text>
<circle cx="985.3000000000001" cy="192.3" r="5" fill="none" stroke="#2a62ad" stroke-width="2.2"/><path d="M989.5 196.5L993.8000000000001 200.9" stroke="#2a62ad" stroke-width="2.6" stroke-linecap="round"/>
<rect x="682" y="245" width="483" height="31" fill="#000" />
<rect x="682" y="276" width="483" height="146" fill="#848284" />
<rect x="803" y="422" width="241" height="96" fill="#ff8040" />
<rect x="803" y="518" width="241" height="194" fill="#c6c3c6" />
<rect x="803" y="712" width="241" height="47" fill="#fff" />
<rect x="343" y="221" width="1" height="551" fill="#6b6b6b" />
<rect x="439" y="221" width="1" height="551" fill="#6b6b6b" />
<rect x="536" y="238" width="1" height="534" fill="#6b6b6b" />
<rect x="633" y="238" width="1" height="534" fill="#6b6b6b" />
<rect x="730" y="238" width="1" height="534" fill="#6b6b6b" />
<rect x="827" y="238" width="1" height="534" fill="#6b6b6b" />
<rect x="1020" y="221" width="1" height="551" fill="#6b6b6b" />
<rect x="1117" y="221" width="1" height="551" fill="#6b6b6b" />
<rect x="1214" y="221" width="1" height="551" fill="#6b6b6b" />
<rect x="1311" y="221" width="1" height="551" fill="#6b6b6b" />
<rect x="1408" y="221" width="1" height="551" fill="#6b6b6b" />
<rect x="1504" y="221" width="1" height="551" fill="#6b6b6b" />
<rect x="923" y="221" width="2" height="551" fill="#5f5f5f" />
<rect x="279" y="341" width="1290" height="1" fill="#6b6b6b" />
<rect x="279" y="438" width="1290" height="1" fill="#6b6b6b" />
<rect x="279" y="535" width="1290" height="1" fill="#6b6b6b" />
<rect x="279" y="632" width="1290" height="1" fill="#6b6b6b" />
<rect x="279" y="729" width="1290" height="1" fill="#6b6b6b" />
<rect x="682" y="244" width="483" height="1" fill="#787878" />
<rect x="279" y="244" width="403" height="2" fill="#000" />
<rect x="1165" y="244" width="405" height="2" fill="#000" />
<rect x="680" y="244" width="2" height="179" fill="#000" />
<rect x="1165" y="244" width="2" height="179" fill="#000" />
<rect x="680" y="421" width="123" height="2" fill="#000" />
<rect x="1044" y="421" width="123" height="2" fill="#000" />
<rect x="801" y="421" width="2" height="340" fill="#000" />
<rect x="1044" y="421" width="2" height="340" fill="#000" />
<rect x="801" y="759" width="245" height="2" fill="#000" />
<circle cx="923.5" cy="662.5" r="48" fill="#ff8080" stroke="#000" stroke-width="1"/>
<rect x="440" y="220" width="429" height="18" fill="#fff" />
<text x="439.9" y="231.8" textLength="99.0" lengthAdjust="spacingAndGlyphs" >Volume Excavated:</text>
<text x="542.5" y="231.8" textLength="59.2" lengthAdjust="spacingAndGlyphs" >1,591.11 CY</text>
<text x="611.2" y="231.8" textLength="74.2" lengthAdjust="spacingAndGlyphs" >Trench Depth:</text>
<text x="689.2" y="231.8" textLength="36.1" lengthAdjust="spacingAndGlyphs" >5.33 LF</text>
<text x="734.3" y="231.8" textLength="95.0" lengthAdjust="spacingAndGlyphs" >Current Fill Depth:</text>
<text x="833.5" y="231.8" textLength="36.0" lengthAdjust="spacingAndGlyphs" >5.33 LF</text>
<rect x="289" y="251" width="52" height="18" fill="#fff" />
<text x="289.2" y="262.6" textLength="51.8" lengthAdjust="spacingAndGlyphs" >293.33 TN</text>
<rect x="289" y="341" width="61" height="18" fill="#fff" />
<text x="289.2" y="352.2" textLength="61.3" lengthAdjust="spacingAndGlyphs" >1,320.00 TN</text>
<rect x="289" y="461" width="51" height="18" fill="#fff" />
<text x="289.2" y="472.7" textLength="50.8" lengthAdjust="spacingAndGlyphs" >222.22 CY</text>
<rect x="289" y="607" width="52" height="18" fill="#fff" />
<text x="289.2" y="618.2" textLength="51.8" lengthAdjust="spacingAndGlyphs" >533.72 TN</text>
<rect x="289" y="727" width="52" height="18" fill="#fff" />
<text x="289.2" y="738.6" textLength="51.8" lengthAdjust="spacingAndGlyphs" >158.89 TN</text>
<rect x="1533" y="251" width="36" height="18" fill="#fff" />
<text x="1533.2" y="262.6" textLength="35.8" lengthAdjust="spacingAndGlyphs" >0.33 LF</text>
<rect x="1533" y="341" width="36" height="18" fill="#fff" />
<text x="1533.2" y="352.2" textLength="35.8" lengthAdjust="spacingAndGlyphs" >1.50 LF</text>
<rect x="1533" y="461" width="36" height="18" fill="#fff" />
<text x="1533.2" y="472.6" textLength="35.8" lengthAdjust="spacingAndGlyphs" >1.00 LF</text>
<rect x="1533" y="607" width="36" height="18" fill="#fff" />
<text x="1533.2" y="618.6" textLength="35.8" lengthAdjust="spacingAndGlyphs" >2.00 LF</text>
<rect x="1533" y="727" width="36" height="18" fill="#fff" />
<text x="1533.2" y="738.6" textLength="35.8" lengthAdjust="spacingAndGlyphs" >0.50 LF</text>
<rect x="280.5" y="782.5" width="29" height="27" fill="#e8e3e8" stroke="#adadad" />
<g transform="translate(280 782)"><path d="M18 19.8L21 17L27 22.4V25.8H24.4Z" fill="#666"/><circle cx="13.5" cy="12.25" r="8.5" fill="#fff" stroke="#666" stroke-width="4"/>
<rect x="8.1" y="11" width="10.8" height="2.8" fill="#4fae8a"/>
<rect x="12.1" y="7.2" width="2.9" height="10.6" fill="#4fae8a"/>
</g>
<rect x="317.5" y="782.5" width="29" height="27" fill="#e8e3e8" stroke="#adadad" />
<g transform="translate(317 782)"><path d="M18 19.8L21 17L27 22.4V25.8H24.4Z" fill="#666"/><circle cx="13.5" cy="12.25" r="8.5" fill="#fff" stroke="#666" stroke-width="4"/>
<rect x="8.1" y="11" width="10.8" height="2.8" fill="#d04a2e"/>
</g>
<rect x="1481.5" y="787.5" width="85" height="23" fill="#e8e3e8" stroke="#adadad" />
<text x="1515.7" y="803" textLength="16.8" lengthAdjust="spacingAndGlyphs" >OK</text>
<rect x="1516" y="805" width="9" height="1" fill="#000" />
</svg>
</body></html>
